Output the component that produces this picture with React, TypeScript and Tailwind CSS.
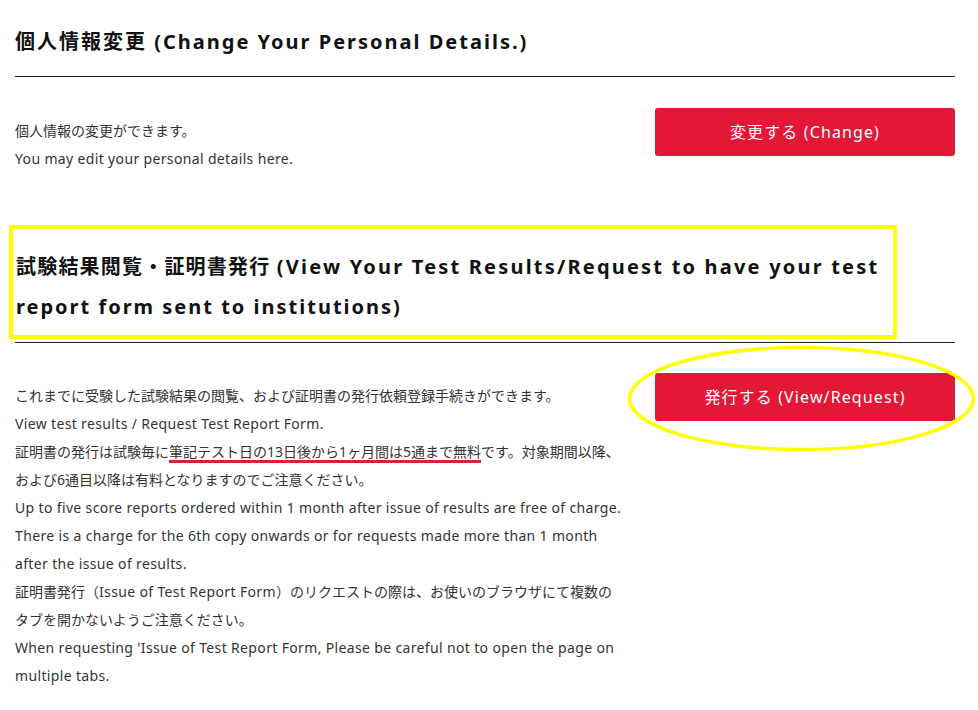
import React from 'react';

const font = { fontFamily: '"Noto Sans", "Noto Sans CJK JP", sans-serif' };

const App: React.FC = () => {
  return (
    <div className="w-[978px] min-h-[710px] bg-white pl-[15px] pr-[23px] text-[#333]" style={font}>
      {/* Personal details */}
      <div className="pt-[26px] pb-[18px] border-b border-[#222]">
        <h2 className="text-[20px] leading-[32px] font-bold tracking-[0.1em] text-[#111]">
          個人情報変更 (Change Your Personal Details.)
        </h2>
      </div>

      <div className="flex justify-between items-start pt-[31px]">
        <div className="pt-[9px] text-[14px] leading-[28px]">
          <p>個人情報の変更ができます。</p>
          <p className="tracking-[0.025em]">You may edit your personal details here.</p>
        </div>
        <button className="w-[300px] h-[48px] rounded-[3px] bg-[#e31837] text-white text-[16px] tracking-[0.07em]">
          変更する (Change)
        </button>
      </div>

      {/* Test results */}
      <div className="mt-[52px] -ml-[6px] w-[888px] h-[114px] border-4 border-[#ffff00] pl-[3px] pt-[18px]">
        <h2 className="text-[20px] leading-[40px] font-bold tracking-[0.06em] text-[#111]">
          試験結果閲覧・証明書発行{' '}
          <span className="tracking-[0.11em]">(View Your Test Results/Request to have your test</span>
          <br />
          <span className="tracking-[0.1em]">report form sent to institutions)</span>
        </h2>
      </div>
      <div className="mt-[3px] border-b border-[#222]" />

      <div className="relative flex justify-between items-start pt-[30px]">
        <div className="pt-[9px] text-[14px] leading-[28px]">
          <p>これまでに受験した試験結果の閲覧、および証明書の発行依頼登録手続きができます。</p>
          <p className="tracking-[0.025em]">View test results / Request Test Report Form.</p>
          <p>
            証明書の発行は試験毎に
            <span className="underline decoration-[#e0202e] decoration-[3px] underline-offset-[3px]">
              筆記テスト日の13日後から1ヶ月間は5通まで無料
            </span>
            です。対象期間以降、
            <br />
            および6通目以降は有料となりますのでご注意ください。
          </p>
          <p className="tracking-[0.025em]">
            Up to five score reports ordered within 1 month after issue of results are free of charge.
          </p>
          <p className="tracking-[0.025em]">
            There is a charge for the 6th copy onwards or for requests made more than 1 month
            <br />
            after the issue of results.
          </p>
          <p>
            証明書発行（<span className="tracking-[0.025em]">Issue of Test Report Form</span>
            ）のリクエストの際は、お使いのブラウザにて複数の
            <br />
            タブを開かないようご注意ください。
          </p>
          <p className="tracking-[0.025em]">
            When requesting 'Issue of Test Report Form, Please be careful not to open the page on
            <br />
            multiple tabs.
          </p>
        </div>
        <div className="relative shrink-0">
          <button className="w-[300px] h-[48px] rounded-[3px] bg-[#e31837] text-white text-[16px] tracking-[0.07em]">
            発行する (View/Request)
          </button>
          {/* highlight ellipse */}
          <svg
            className="absolute pointer-events-none left-[-28px] top-[-28px]"
            width="350"
            height="110"
            viewBox="0 0 350 110"
          >
            <ellipse cx="174.5" cy="53.5" rx="172" ry="51" fill="none" stroke="#ffff00" strokeWidth="3.5" />
          </svg>
        </div>
      </div>
    </div>
  );
};

export default App;
